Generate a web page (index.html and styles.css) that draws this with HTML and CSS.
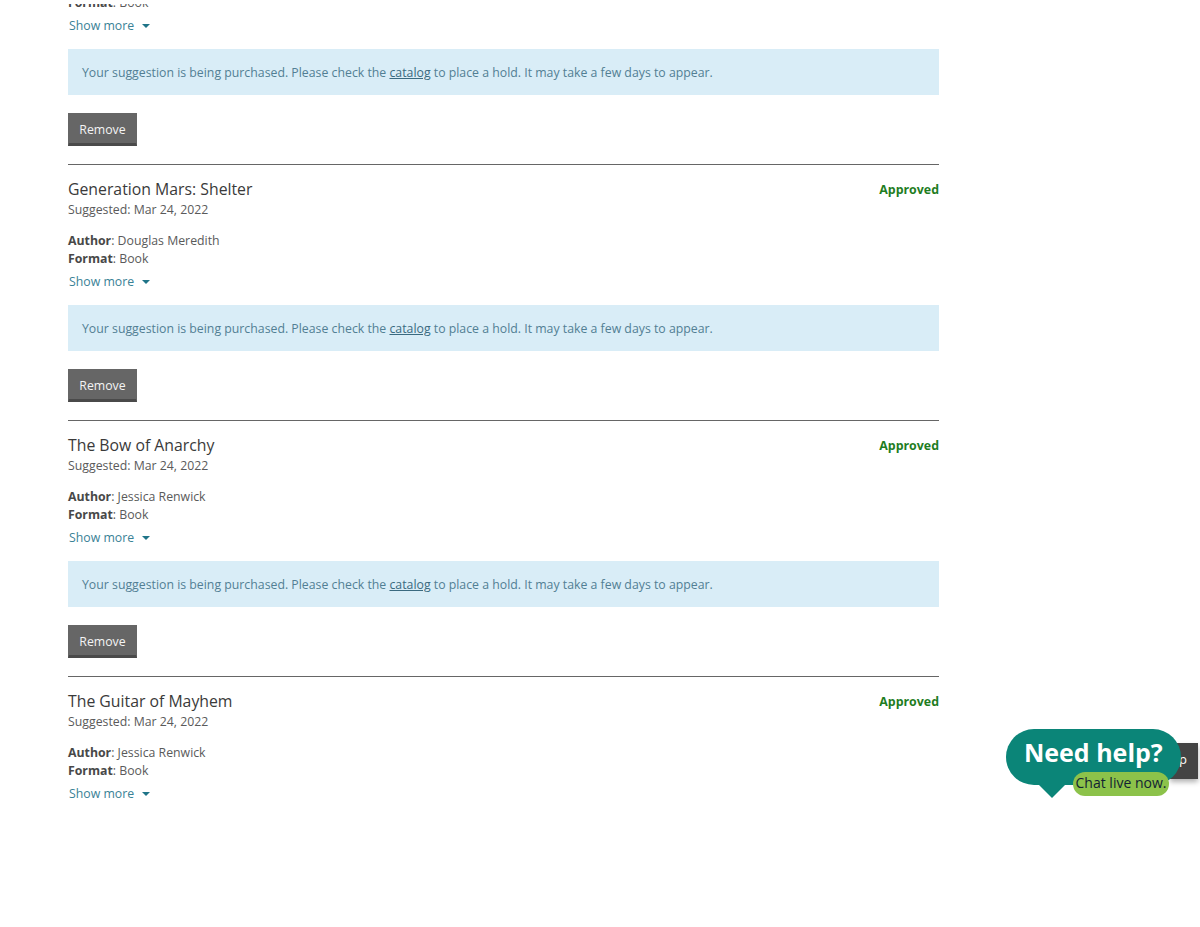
FILE: index.html
```html
<!DOCTYPE html>
<html lang="en">
<head>
  <meta charset="UTF-8">
  <title>My suggestions</title>
  <link rel="stylesheet" href="styles.css">
</head>
<body>
  <div class="top-cover"></div>

  <main class="suggestions">
    <div class="item-tail">
      <div class="meta"><b>Format</b>: Book</div>
      <a class="show-more">Show more <span class="caret"></span></a>
      <div class="alert">Your suggestion is being purchased. Please check the <a>catalog</a> to place a hold. It may take a few days to appear.</div>
      <button class="remove">Remove</button>
    </div>

    <div class="item">
      <div class="item-head">
        <h3>Generation Mars: Shelter</h3>
        <span class="status">Approved</span>
      </div>
      <div class="suggested">Suggested: Mar 24, 2022</div>
      <div class="meta first"><b>Author</b>: Douglas Meredith</div>
      <div class="meta"><b>Format</b>: Book</div>
      <a class="show-more">Show more <span class="caret"></span></a>
      <div class="alert">Your suggestion is being purchased. Please check the <a>catalog</a> to place a hold. It may take a few days to appear.</div>
      <button class="remove">Remove</button>
    </div>

    <div class="item">
      <div class="item-head">
        <h3>The Bow of Anarchy</h3>
        <span class="status">Approved</span>
      </div>
      <div class="suggested">Suggested: Mar 24, 2022</div>
      <div class="meta first"><b>Author</b>: Jessica Renwick</div>
      <div class="meta"><b>Format</b>: Book</div>
      <a class="show-more">Show more <span class="caret"></span></a>
      <div class="alert">Your suggestion is being purchased. Please check the <a>catalog</a> to place a hold. It may take a few days to appear.</div>
      <button class="remove">Remove</button>
    </div>

    <div class="item">
      <div class="item-head">
        <h3>The Guitar of Mayhem</h3>
        <span class="status">Approved</span>
      </div>
      <div class="suggested">Suggested: Mar 24, 2022</div>
      <div class="meta first"><b>Author</b>: Jessica Renwick</div>
      <div class="meta"><b>Format</b>: Book</div>
      <a class="show-more">Show more <span class="caret"></span></a>
    </div>
  </main>

  <!-- chat widget, sits over the page -->
  <div class="help-tab">p</div>
  <div class="chat">
    <div class="chat-title">Need help?</div>
    <div class="chat-pill">Chat live now.</div>
  </div>
</body>
</html>
```

FILE: styles.css
```css
html, body {
  height: 100%;
}

body {
  margin: 0;
  overflow: hidden;
  background-color: #fff;
  color: #5a5a5a;
  font-family: "Open Sans", Arial, sans-serif;
  font-size: 12.3px;
  line-height: 18px;
}

.top-cover {
  position: absolute;
  left: 0;
  top: 0;
  width: 100%;
  height: 4px;
  background-color: #fff;
}

.suggestions {
  width: 871px;
  margin: -6px 0 0 68px;
}

.item {
  border-top: 1px solid #666;
  padding-top: 14px;
  height: 241px;
}

.item-tail {
  height: 170px;
}

.item-head {
  display: flex;
  justify-content: space-between;
  align-items: center;
  height: 21px;
}

h3 {
  margin: 0;
  color: #3a3a3a;
  font-size: 15.8px;
  font-weight: 400;
  line-height: 21px;
}

.status {
  color: #1f7d1f;
  font-size: 12.4px;
  font-weight: 700;
}

.suggested {
  margin-top: 1px;
}

.meta b {
  color: #484848;
}

.meta.first {
  margin-top: 13px;
}

.show-more {
  display: block;
  margin-top: 5px;
  padding-left: 1px;
  color: #3a8296;
}

.caret {
  display: inline-block;
  margin-left: 5px;
  border-left: 4px solid transparent;
  border-right: 4px solid transparent;
  border-top: 4px solid #1f7488;
  vertical-align: 2px;
}

.alert {
  margin-top: 14px;
  padding: 14px 14px 12px;
  height: 20px;
  background-color: #d9edf7;
  color: #527f94;
  line-height: 20px;
}

.alert a {
  color: #3a6a80;
  text-decoration: underline;
}

.remove {
  display: block;
  margin-top: 18px;
  width: 69px;
  height: 33px;
  padding: 2px 0 0;
  background-color: #666;
  border: 1px solid #666;
  border-bottom: 3px solid #4a4a4a;
  color: #f4f4f4;
  font-family: inherit;
  font-size: 12.3px;
}

.help-tab {
  position: absolute;
  left: 1170px;
  top: 743px;
  width: 28px;
  height: 36px;
  box-sizing: border-box;
  padding-right: 11px;
  background-color: #444;
  box-shadow: 0 3px 5px rgba(0, 0, 0, 0.3);
  color: #fff;
  font-size: 13px;
  line-height: 32px;
  text-align: right;
}

.chat {
  position: absolute;
  left: 1006px;
  top: 729px;
  width: 175px;
  height: 56px;
  border-radius: 28px;
  background-color: #0b8578;
}

.chat::after {
  content: "";
  position: absolute;
  left: 33px;
  top: 56px;
  border-left: 13px solid transparent;
  border-right: 13px solid transparent;
  border-top: 13px solid #0b8578;
}

.chat-title {
  padding-left: 18px;
  color: #fff;
  font-size: 25px;
  font-weight: 700;
  line-height: 47px;
}

.chat-pill {
  position: absolute;
  left: 67px;
  top: 43px;
  width: 96px;
  height: 24px;
  border-radius: 12px;
  background-color: #8cc24a;
  color: #123;
  font-size: 14px;
  line-height: 22px;
  text-align: center;
}
```
